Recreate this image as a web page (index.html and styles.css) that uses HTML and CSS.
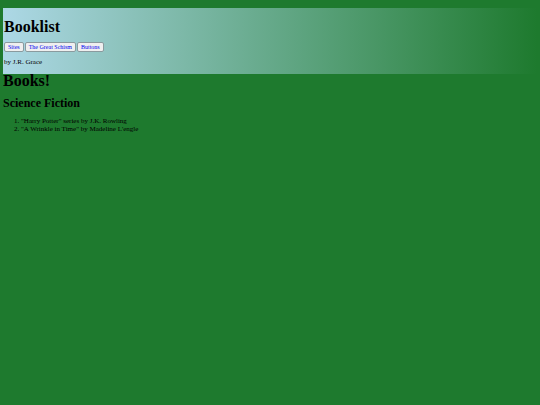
FILE: index.html
```html
<!DOCTYPE html>
<html lang="en">
<head>
    <meta charset="UTF-8">
    <meta name="viewport" content="width=device-width, initial-scale=1.0">
    <title>Booklist</title>
    <link rel="stylesheet" href="styles.css">
</head>
<body>
    <header class="banner">
        <h1>Booklist</h1>
        <nav>
            <button type="button">Sites</button>
            <button type="button">The Great Schism</button>
            <button type="button">Buttons</button>
        </nav>
        <p>by J.R. Grace</p>
    </header>
    <main>
        <h1>Books!</h1>
        <h2>Science Fiction</h2>
        <ol>
            <li>"Harry Potter" series by J.K. Rowling</li>
            <li>"A Wrinkle in Time" by Madeline L'engle</li>
        </ol>
    </main>
</body>
</html>
```

FILE: styles.css
```css
body {
    margin: 8px 3px;
    background-color: #1e7a2e;
    color: #000;
    font-family: Georgia, "Liberation Serif", serif;
    font-size: 7px;
    line-height: 8px;
}
h1 {
    margin: 0;
    font-size: 16px;
    line-height: 14px;
}
h2 {
    margin: 9px 0 8px;
    font-size: 12px;
    line-height: 12px;
}
.banner {
    padding: 12px 1px 8px;
    background-image: linear-gradient(to right, lightblue, #1e7a2e);
}
nav {
    display: flex;
    gap: 1px;
    margin: 8px 0 6px;
}
button {
    padding: 0 3px;
    border: 1px solid #8a9a9e;
    border-radius: 2px;
    background-color: #efefef;
    color: #00e;
    font-family: inherit;
    font-size: 6px;
    line-height: 8px;
}
p {
    margin: 0;
}
ol {
    margin: 0;
    padding-left: 18px;
}
```
